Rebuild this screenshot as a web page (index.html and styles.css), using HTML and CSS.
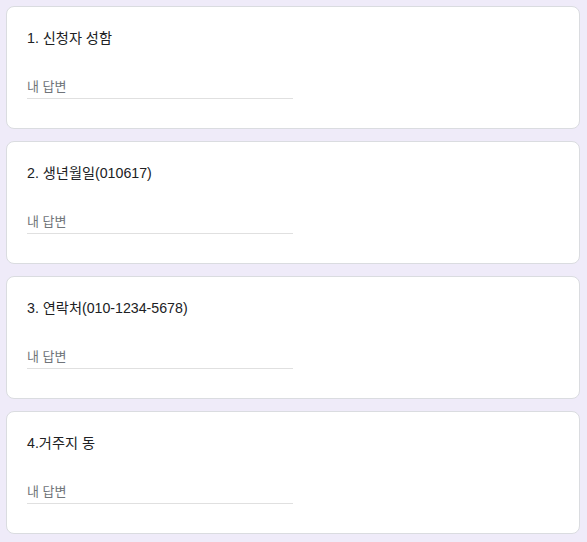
FILE: index.html
```html
<!DOCTYPE html>
<html lang="ko">
<head>
<meta charset="utf-8">
<link rel="stylesheet" href="styles.css">
</head>
<body>
<div class="form">
  <div class="card">
    <div class="title">1. 신청자 성함</div>
    <div class="answer">내 답변</div>
  </div>
  <div class="card">
    <div class="title">2. 생년월일(010617)</div>
    <div class="answer">내 답변</div>
  </div>
  <div class="card">
    <div class="title">3. 연락처(010-1234-5678)</div>
    <div class="answer">내 답변</div>
  </div>
  <div class="card">
    <div class="title">4.거주지 동</div>
    <div class="answer">내 답변</div>
  </div>
</div>
</body>
</html>
```
FILE: styles.css
```css
html, body {
  margin: 0;
  padding: 0;
  background: #efebf9;
}
body {
  font-family: "Liberation Sans", "Noto Sans CJK KR", sans-serif;
}
.form {
  display: flex;
  flex-direction: column;
  gap: 12px;
  padding: 6px 7px 0 6px;
}
.card {
  box-sizing: border-box;
  height: 123px;
  background: #ffffff;
  border: 1px solid #dadce0;
  border-radius: 8px;
  padding: 19px 20px 0;
}
.title {
  font-size: 14.2px;
  line-height: 24px;
  color: #202124;
}
.answer {
  margin-top: 26px;
  width: 266px;
  height: 22px;
  line-height: 22px;
  font-size: 13px;
  color: #70757a;
  border-bottom: 1px solid #e0e0e0;
}
```
